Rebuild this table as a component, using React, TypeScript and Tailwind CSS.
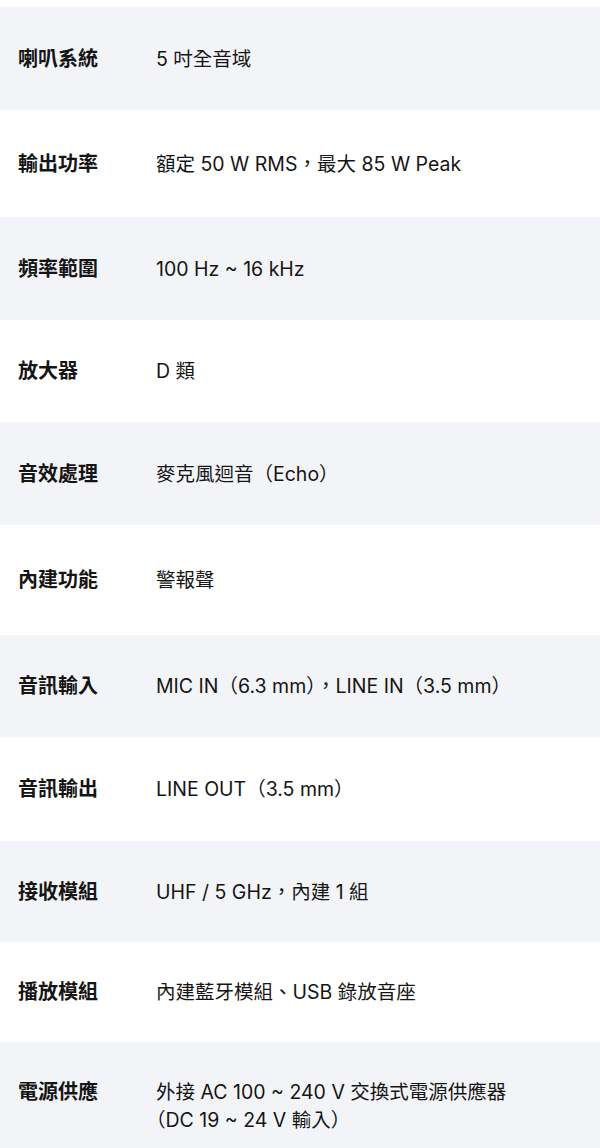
import React from "react";

const rows: { label: string; value: React.ReactNode; cls: string }[] = [
  { label: "喇叭系統", value: "5 吋全音域", cls: "h-[103px] bg-[#f3f4f7]" },
  { label: "輸出功率", value: "額定 50 W RMS，最大 85 W Peak", cls: "h-[107px] bg-white" },
  { label: "頻率範圍", value: "100 Hz ~ 16 kHz", cls: "h-[103px] bg-[#f3f4f7]" },
  { label: "放大器", value: "D 類", cls: "h-[102px] bg-white" },
  { label: "音效處理", value: "麥克風迴音（Echo）", cls: "h-[103px] bg-[#f3f4f7]" },
  { label: "內建功能", value: "警報聲", cls: "h-[110px] bg-white" },
  { label: "音訊輸入", value: "MIC IN（6.3 mm），LINE IN（3.5 mm）", cls: "h-[102px] bg-[#f3f4f7]" },
  { label: "音訊輸出", value: "LINE OUT（3.5 mm）", cls: "h-[104px] bg-white" },
  { label: "接收模組", value: "UHF / 5 GHz，內建 1 組", cls: "h-[101px] bg-[#f3f4f7]" },
  { label: "播放模組", value: "內建藍牙模組、USB 錄放音座", cls: "h-[100px] bg-white" },
];

const font = { fontFamily: "Inter, 'Noto Sans CJK TC', sans-serif" };

export default function App() {
  return (
    <div className="w-[600px] h-[1148px] overflow-hidden bg-white pt-[7px] text-[#151515]" style={font}>
      {rows.map((r) => (
        <div key={r.label} className={`flex items-center ${r.cls}`}>
          <div className="w-[156px] shrink-0 pl-[18px] text-[20px] font-bold leading-[28px]">{r.label}</div>
          <div className="text-[19.5px] leading-[28px]">{r.value}</div>
        </div>
      ))}
      <div className="flex items-start bg-[#f3f4f7] pt-[36px] pb-[20px]">
        <div className="w-[156px] shrink-0 pl-[18px] text-[20px] font-bold leading-[28px]">電源供應</div>
        <div className="text-[19.5px] leading-[28px]">
          <div>外接 AC 100 ~ 240 V 交換式電源供應器</div>
          <div className="-ml-[10px]">（DC 19 ~ 24 V 輸入）</div>
        </div>
      </div>
    </div>
  );
}
